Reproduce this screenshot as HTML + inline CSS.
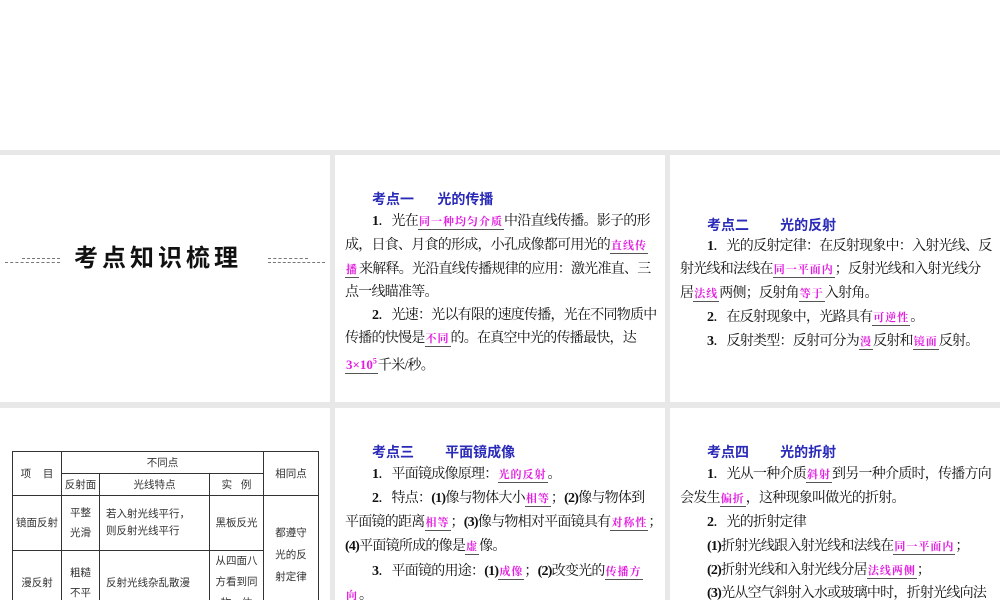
<!DOCTYPE html>
<html><head><meta charset="utf-8"><style>
*{margin:0;padding:0;box-sizing:border-box}
html,body{width:1000px;height:600px;overflow:hidden}
body{background:#e8e8e8;position:relative;font-family:"Liberation Serif","Noto Serif CJK SC",serif;}
.p{position:absolute;background:#fff;overflow:hidden}
.l{position:absolute;white-space:nowrap;font-size:14px;color:#111;line-height:18px;letter-spacing:-0.75px}
.t{position:absolute;white-space:nowrap;font-size:14px;color:#2a2ab8;font-weight:bold;font-family:"Liberation Sans","Noto Sans CJK SC",sans-serif;line-height:18px}
.h{color:#e21ee0;font-weight:bold;font-size:11px;letter-spacing:1px;border-bottom:1px solid #555;padding:0 1px 1px;}
b{font-weight:bold}
table{position:absolute;left:12px;top:451px;border-collapse:collapse;font-family:"Liberation Sans","Noto Sans CJK SC",sans-serif;font-size:10.5px;color:#333}
td{border:1px solid #333;text-align:center;line-height:20px;padding:0}
</style></head><body>
<div class="p" style="left:0;top:0;width:1000px;height:150px"></div>
<div class="p" style="left:0;top:155px;width:330px;height:247px">
 <div style="position:absolute;left:5px;top:107px;width:55px;border-top:1px dashed #777"></div>
 <div style="position:absolute;left:22px;top:103px;width:38px;border-top:1px dashed #777"></div>
 <div style="position:absolute;left:268px;top:107px;width:57px;border-top:1px dashed #777"></div>
 <div style="position:absolute;left:268px;top:103px;width:40px;border-top:1px dashed #777"></div>
 <div style="position:absolute;left:74px;top:89px;font-size:24px;font-weight:bold;letter-spacing:4px;font-family:'Liberation Sans','Noto Sans CJK SC',sans-serif;color:#111;line-height:30px">考点知识梳理</div>
</div>
<div class="p" style="left:335px;top:155px;width:330px;height:247px"></div>
<div class="p" style="left:670px;top:155px;width:330px;height:247px"></div>
<div class="p" style="left:0;top:408px;width:330px;height:192px"></div>
<div class="p" style="left:335px;top:408px;width:330px;height:192px"></div>
<div class="p" style="left:670px;top:408px;width:330px;height:192px"></div>

<div class="t" style="left:372px;top:190px">考点一&nbsp;&nbsp;&nbsp;&nbsp;&nbsp;&nbsp;光的传播</div>
<div class="l" style="left:372px;top:213px"><b>1</b>．光在<span class="h">同一种均匀介质</span>中沿直线传播。影子的形</div>
<div class="l" style="left:345px;top:237px">成，日食、月食的形成，小孔成像都可用光的<span class="h">直线传</span></div>
<div class="l" style="left:345px;top:261px"><span class="h">播</span>来解释。光沿直线传播规律的应用：激光准直、三</div>
<div class="l" style="left:345px;top:284px">点一线瞄准等。</div>
<div class="l" style="left:372px;top:307px"><b>2</b>．光速：光以有限的速度传播，光在不同物质中</div>
<div class="l" style="left:345px;top:330px">传播的快慢是<span class="h">不同</span>的。在真空中光的传播最快，达</div>
<div class="l" style="left:345px;top:353px"><span class="h" style="font-size:13px;letter-spacing:0">3×10<sup style="font-size:8px">5</sup></span>千米/秒。</div>

<div class="t" style="left:707px;top:216px">考点二&nbsp;&nbsp;&nbsp;&nbsp;&nbsp;&nbsp;&nbsp;&nbsp;光的反射</div>
<div class="l" style="left:707px;top:238px"><b>1</b>．光的反射定律：在反射现象中：入射光线、反</div>
<div class="l" style="left:680px;top:261px">射光线和法线在<span class="h">同一平面内</span>；反射光线和入射光线分</div>
<div class="l" style="left:680px;top:285px">居<span class="h">法线</span>两侧；反射角<span class="h">等于</span>入射角。</div>
<div class="l" style="left:707px;top:309px"><b>2</b>．在反射现象中，光路具有<span class="h">可逆性</span>。</div>
<div class="l" style="left:707px;top:333px"><b>3</b>．反射类型：反射可分为<span class="h">漫</span>反射和<span class="h">镜面</span>反射。</div>

<div class="t" style="left:372px;top:443px">考点三&nbsp;&nbsp;&nbsp;&nbsp;&nbsp;&nbsp;&nbsp;&nbsp;平面镜成像</div>
<div class="l" style="left:372px;top:466px"><b>1</b>．平面镜成像原理：<span class="h">光的反射</span>。</div>
<div class="l" style="left:372px;top:490px"><b>2</b>．特点：<b>(1)</b>像与物体大小<span class="h">相等</span>；<b>(2)</b>像与物体到</div>
<div class="l" style="left:345px;top:514px">平面镜的距离<span class="h">相等</span>；<b>(3)</b>像与物相对平面镜具有<span class="h">对称性</span>；</div>
<div class="l" style="left:345px;top:538px"><b>(4)</b>平面镜所成的像是<span class="h">虚</span>像。</div>
<div class="l" style="left:372px;top:563px"><b>3</b>．平面镜的用途：<b>(1)</b><span class="h">成像</span>；<b>(2)</b>改变光的<span class="h">传播方</span></div>
<div class="l" style="left:345px;top:587px"><span class="h">向</span>。</div>

<div class="t" style="left:707px;top:443px">考点四&nbsp;&nbsp;&nbsp;&nbsp;&nbsp;&nbsp;&nbsp;&nbsp;光的折射</div>
<div class="l" style="left:707px;top:466px"><b>1</b>．光从一种介质<span class="h">斜射</span>到另一种介质时，传播方向</div>
<div class="l" style="left:680px;top:490px">会发生<span class="h">偏折</span>，这种现象叫做光的折射。</div>
<div class="l" style="left:707px;top:514px"><b>2</b>．光的折射定律</div>
<div class="l" style="left:707px;top:538px"><b>(1)</b>折射光线跟入射光线和法线在<span class="h">同一平面内</span>；</div>
<div class="l" style="left:707px;top:562px"><b>(2)</b>折射光线和入射光线分居<span class="h">法线两侧</span>；</div>
<div class="l" style="left:707px;top:585px"><b>(3)</b>光从空气斜射入水或玻璃中时，折射光线向法</div>

<table style="border:1.5px solid #222">
<tr style="height:22px"><td rowspan="2" style="width:49px">项&nbsp;&nbsp;&nbsp;&nbsp;目</td><td colspan="3">不同点</td><td rowspan="2" style="width:55px">相同点</td></tr>
<tr style="height:22px"><td style="width:38px">反射面</td><td style="width:110px">光线特点</td><td style="width:54px">实&nbsp;&nbsp;&nbsp;例</td></tr>
<tr style="height:55px"><td>镜面反射</td><td>平整<br>光滑</td><td style="text-align:left;padding-left:6px;line-height:17px">若入射光线平行，<br>则反射光线平行</td><td>黑板反光</td><td rowspan="2" style="line-height:22px">都遵守<br>光的反<br>射定律</td></tr>
<tr style="height:60px"><td>漫反射</td><td>粗糙<br>不平</td><td style="text-align:left;padding-left:6px">反射光线杂乱散漫</td><td style="line-height:21px">从四面八<br>方看到同<br>物一体</td></tr>
</table>
</body></html>
